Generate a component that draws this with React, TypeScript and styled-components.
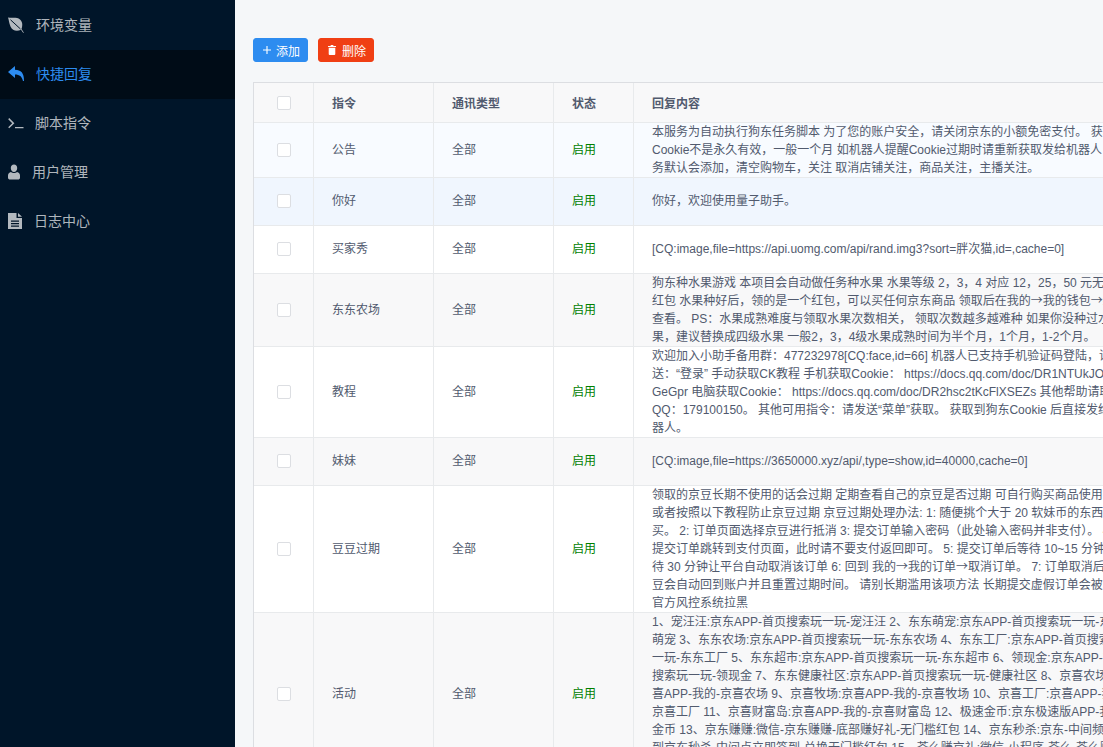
import React from "react";
import styled, { createGlobalStyle } from "styled-components";

const Global = createGlobalStyle`
  html, body { margin: 0; padding: 0; height: 100%; overflow: hidden; }
  #root { height: 100%; }
  body { font-family: "Liberation Sans", "Noto Sans CJK SC", sans-serif; font-size: 12px; color: #515a6e; }
  * { box-sizing: border-box; }
`;

const Page = styled.div`
  display: flex;
  height: 747px;
  overflow: hidden;
  background: #f5f7f9;
`;
const Sidebar = styled.nav`
  flex: 0 0 235px;
  padding-top: 1px;
  background: #001529;
`;
const MenuItem = styled.div<{ $active?: boolean; $gap: number }>`
  display: flex;
  align-items: center;
  height: 49px;
  padding: 0 0 2px 8px;
  gap: ${(p) => p.$gap}px;
  font-size: 14px;
  color: ${(p) => (p.$active ? "#2d8cf0" : "rgba(255,255,255,0.7)")};
  background: ${(p) => (p.$active ? "#000c17" : "transparent")};
`;
const MenuLabel = styled.span`
  margin-bottom: 2px;
`;
const IconBox = styled.svg`
  flex: none;
  display: block;
  fill: currentColor;
`;
const Main = styled.main`
  flex: 1;
  min-width: 0;
  padding: 38px 0 0 18px;
  overflow: hidden;
`;
const Toolbar = styled.div`
  display: flex;
  gap: 10px;
  margin-bottom: 20px;
`;
const Button = styled.button<{ $color: string; $gap: number }>`
  display: inline-flex;
  align-items: center;
  gap: ${(p) => p.$gap}px;
  height: 24px;
  padding: 0 7px 0 9px;
  border: 1px solid ${(p) => p.$color};
  border-radius: 3px;
  background: ${(p) => p.$color};
  color: #fff;
  font: inherit;
  font-size: 12px;
`;
const Table = styled.table`
  width: 1200px;
  table-layout: fixed;
  border-collapse: separate;
  border-spacing: 0;
  border-top: 1px solid #dcdee2;
  border-left: 1px solid #dcdee2;
`;
const HeadCell = styled.th`
  height: 40px;
  padding: 0 18px;
  text-align: left;
  font-weight: 700;
  color: #515a6e;
  background: #f8f8f9;
  border-right: 1px solid #e8eaec;
  border-bottom: 1px solid #e8eaec;
`;
const Row = styled.tr<{ $bg: string; $single: boolean }>`
  background: ${(p) => p.$bg};
  td {
    padding-bottom: ${(p) => (p.$single ? "1px" : "0")};
  }
`;
const Cell = styled.td<{ $on?: boolean }>`
  height: 48px;
  padding: 0 18px;
  line-height: 18px;
  color: ${(p) => (p.$on ? "#008000" : "#515a6e")};
  border-right: 1px solid #e8eaec;
  border-bottom: 1px solid #e8eaec;
  overflow: hidden;
`;
const Line = styled.span`
  display: block;
  white-space: nowrap;
`;
const Arrow = styled.span`
  font-family: "Noto Sans CJK SC", sans-serif;
  line-height: 0;
`;
const Check = styled.span`
  display: block;
  margin: 0 auto;
  width: 14px;
  height: 14px;
  background: #fff;
  border: 1px solid #dcdee2;
  border-radius: 2px;
`;
const CheckHead = styled(HeadCell)`
  padding: 0;
`;
const CheckCell = styled(Cell)`
  padding: 0;
`;

const LeafIcon = () => (
  <IconBox width="16" height="16" viewBox="0 0 16 16">
    <path d="M0 .5C4 1.500 9-.2 12 2.500c3 2.500 2.500 6.500 1.500 9.500l2.300 3.500-.5.4-2.300-3.100C9 14.500 4.500 14 2.500 9.500 1 6 1 3 0 .5z" />
    <path d="M2.500 2.800L12.500 12" stroke="#001529" strokeWidth="1" fill="none" />
  </IconBox>
);
const ReplyIcon = () => (
  <IconBox width="16" height="16" viewBox="0 0 16 16">
    <path d="M7 0v3.800C13 3.800 16 7 16 15h-1C14 10.500 11.500 8.400 7 8.400V12L0 6z" />
  </IconBox>
);
const TerminalIcon = () => (
  <IconBox width="16" height="16" viewBox="0 0 16 16">
    <path d="M.2 4.200l1-1.100 5.200 5.100-5.200 5.100-1-1.100 4-4zM7 12h8.500v1.300H7z" />
  </IconBox>
);
const UserIcon = () => (
  <IconBox width="12" height="16" viewBox="0 0 12 16">
    <path d="M6 .5c1.900 0 3.200 1.400 3.200 3.500S8 8 6 8 2.800 6.100 2.800 4 4.100.5 6 .5zM3 8c.8.800 1.900 1.100 3 1.100S8.200 8.800 9 8c1.800.4 3 1.500 3 3.500V14c0 .9-1 1.500-2 1.500H2c-1 0-2-.6-2-1.500v-2.500C0 9.500 1.200 8.400 3 8z" />
  </IconBox>
);
const DocIcon = () => (
  <IconBox width="14" height="16" viewBox="0 0 14 16">
    <path d="M0 0h8.500v5H14v11H0zM10 0l4 3.700h-4zM3 7.500v1.200h8V7.500zM3 10v1.200h8V10zM3 12.500v1.200h8v-1.200z" fillRule="evenodd" />
  </IconBox>
);
const PlusIcon = () => (
  <IconBox width="8" height="8" viewBox="0 0 10 10">
    <path d="M4.300 0h1.400v4.300H10v1.400H5.700V10H4.300V5.700H0V4.300h4.300z" />
  </IconBox>
);
const TrashIcon = () => (
  <IconBox width="8" height="10" viewBox="0 0 9 11">
    <path d="M3 0h3v1h3v1.200H0V1h3zM.8 3h7.400v7c0 .6-.4 1-1 1H1.800c-.6 0-1-.4-1-1z" />
  </IconBox>
);

const menu = [
  { label: "环境变量", icon: <LeafIcon />, gap: 12 },
  { label: "快捷回复", icon: <ReplyIcon />, gap: 12, active: true },
  { label: "脚本指令", icon: <TerminalIcon />, gap: 11 },
  { label: "用户管理", icon: <UserIcon />, gap: 12 },
  { label: "日志中心", icon: <DocIcon />, gap: 12 },
];

const rows = [
  { name: "公告", bg: "#f8fbff", lines: [
    "本服务为自动执行狗东任务脚本 为了您的账户安全，请关闭京东的小额免密支付。 获取Cookie后",
    "Cookie不是永久有效，一般一个月 如机器人提醒Cookie过期时请重新获取发给机器人 脚本运行任",
    "务默认会添加，清空购物车，关注 取消店铺关注，商品关注，主播关注。",
  ]},
  { name: "你好", bg: "#f0f6fe", lines: ["你好，欢迎使用量子助手。"] },
  { name: "买家秀", bg: "#ffffff", lines: ["[CQ:image,file=https://api.uomg.com/api/rand.img3?sort=胖次猫,id=,cache=0]"] },
  { name: "东东农场", bg: "#f8f8f9", lines: [
    "狗东种水果游戏 本项目会自动做任务种水果 水果等级 2，3，4 对应 12，25，50 元无门槛",
    "红包 水果种好后，领的是一个红包，可以买任何京东商品 领取后在我的→我的钱包→红包",
    "查看。 PS：水果成熟难度与领取水果次数相关， 领取次数越多越难种 如果你没种过水",
    "果，建议替换成四级水果 一般2，3，4级水果成熟时间为半个月，1个月，1-2个月。",
  ]},
  { name: "教程", bg: "#ffffff", lines: [
    "欢迎加入小助手备用群：477232978[CQ:face,id=66] 机器人已支持手机验证码登陆，请发",
    "送：“登录” 手动获取CK教程 手机获取Cookie： https://docs.qq.com/doc/DR1NTUkJOeGeGpr",
    "GeGpr 电脑获取Cookie： https://docs.qq.com/doc/DR2hsc2tKcFlXSEZs 其他帮助请联系",
    "QQ：179100150。 其他可用指令：请发送“菜单”获取。 获取到狗东Cookie 后直接发给机",
    "器人。",
  ]},
  { name: "妹妹", bg: "#f8f8f9", lines: ["[CQ:image,file=https://3650000.xyz/api/,type=show,id=40000,cache=0]"] },
  { name: "豆豆过期", bg: "#ffffff", lines: [
    "领取的京豆长期不使用的话会过期 定期查看自己的京豆是否过期 可自行购买商品使用",
    "或者按照以下教程防止京豆过期 京豆过期处理办法: 1: 随便挑个大于 20 软妹币的东西购",
    "买。 2: 订单页面选择京豆进行抵消 3: 提交订单输入密码（此处输入密码并非支付）。 4:",
    "提交订单跳转到支付页面，此时请不要支付返回即可。 5: 提交订单后等待 10~15 分钟等",
    "待 30 分钟让平台自动取消该订单 6: 回到 我的→我的订单→取消订单。 7: 订单取消后京",
    "豆会自动回到账户并且重置过期时间。 请别长期滥用该项方法 长期提交虚假订单会被",
    "官方风控系统拉黑",
  ]},
  { name: "活动", bg: "#f8f8f9", lines: [
    "1、宠汪汪:京东APP-首页搜索玩一玩-宠汪汪 2、东东萌宠:京东APP-首页搜索玩一玩-东东",
    "萌宠 3、东东农场:京东APP-首页搜索玩一玩-东东农场 4、东东工厂:京东APP-首页搜索玩",
    "一玩-东东工厂 5、东东超市:京东APP-首页搜索玩一玩-东东超市 6、领现金:京东APP-首页",
    "搜索玩一玩-领现金 7、东东健康社区:京东APP-首页搜索玩一玩-健康社区 8、京喜农场:京",
    "喜APP-我的-京喜农场 9、京喜牧场:京喜APP-我的-京喜牧场 10、京喜工厂:京喜APP-我的-",
    "京喜工厂 11、京喜财富岛:京喜APP-我的-京喜财富岛 12、极速金币:京东极速版APP-我的-",
    "金币 13、京东赚赚:微信-京东赚赚-底部赚好礼-无门槛红包 14、京东秒杀:京东-中间频道往右",
    "到京东秒杀-中间点立即签到-兑换无门槛红包 15、芥么赚京礼:微信-小程序-芥么-芥么赚京礼",
    "芥么赚京礼",
  ]},
];

const withArrows = (text: string) =>
  text.split("→").flatMap((part, i) =>
    i === 0 ? [part] : [<Arrow key={i}>→</Arrow>, part]
  );

export default function App() {
  return (
    <Page>
      <Global />
      <Sidebar>
        {menu.map((m) => (
          <MenuItem key={m.label} $active={m.active} $gap={m.gap}>
            {m.icon}
            <MenuLabel>{m.label}</MenuLabel>
          </MenuItem>
        ))}
      </Sidebar>
      <Main>
        <Toolbar>
          <Button $color="#2d8cf0" $gap={5}><PlusIcon />添加</Button>
          <Button $color="#f03f14" $gap={6}><TrashIcon />删除</Button>
        </Toolbar>
        <Table>
          <colgroup>
            <col width="60" />
            <col width="120" />
            <col width="120" />
            <col width="80" />
            <col width="820" />
          </colgroup>
          <thead>
            <tr>
              <CheckHead><Check /></CheckHead>
              <HeadCell>指令</HeadCell>
              <HeadCell>通讯类型</HeadCell>
              <HeadCell>状态</HeadCell>
              <HeadCell>回复内容</HeadCell>
            </tr>
          </thead>
          <tbody>
            {rows.map((r) => (
              <Row key={r.name} $bg={r.bg} $single={r.lines.length === 1}>
                <CheckCell><Check /></CheckCell>
                <Cell>{r.name}</Cell>
                <Cell>全部</Cell>
                <Cell $on>启用</Cell>
                <Cell>{r.lines.map((l) => <Line key={l}>{withArrows(l)}</Line>)}</Cell>
              </Row>
            ))}
          </tbody>
        </Table>
      </Main>
    </Page>
  );
}
